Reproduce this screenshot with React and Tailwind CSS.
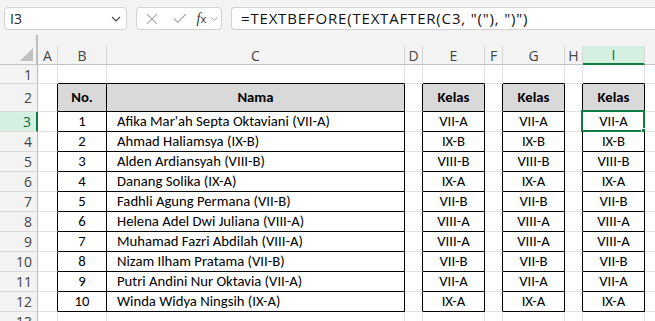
import React from "react";

const names = [
  "Afika Mar'ah Septa Oktaviani (VII-A)",
  "Ahmad Haliamsya (IX-B)",
  "Alden Ardiansyah (VIII-B)",
  "Danang Solika (IX-A)",
  "Fadhli Agung Permana (VII-B)",
  "Helena Adel Dwi Juliana (VIII-A)",
  "Muhamad Fazri Abdilah (VIII-A)",
  "Nizam Ilham Pratama (VII-B)",
  "Putri Andini Nur Oktavia (VII-A)",
  "Winda Widya Ningsih (IX-A)",
];

const cols = ["A", "B", "C", "D", "E", "F", "G", "H", "I", "J"];
const tableCols = ["B", "C", "E", "G", "I"];
const beforeTable = ["A", "D", "F", "H"];
const kelasCols = ["E", "G", "I"];

function kelasOf(n) {
  return n.slice(n.indexOf("(") + 1, n.indexOf(")"));
}

function cellText(r, c) {
  if (r === 2) {
    if (c === "B") return "No.";
    if (c === "C") return "Nama";
    if (kelasCols.includes(c)) return "Kelas";
    return "";
  }
  if (r >= 3 && r <= 12) {
    const i = r - 3;
    if (c === "B") return String(i + 1);
    if (c === "C") return names[i];
    if (kelasCols.includes(c)) return kelasOf(names[i]);
  }
  return "";
}

function Cell({ r, c }) {
  const inRows = r >= 2 && r <= 12;
  const rightBlack = inRows && (tableCols.includes(c) || beforeTable.includes(c));
  const bottomBlack = tableCols.includes(c) && r >= 1 && r <= 12;
  const head = r === 2 && tableCols.includes(c);
  const text = cellText(r, c);
  const selected = r === 3 && c === "I";
  return (
    <div
      className={`relative flex items-center border-r border-b overflow-visible whitespace-nowrap text-[14.7px] text-black font-['Carlito','Lato',sans-serif] ${
        rightBlack ? "border-r-black" : "border-r-[#e1e1e1]"
      } ${bottomBlack ? "border-b-black" : "border-b-[#e1e1e1]"} ${
        head ? "bg-[#d9d9d9] font-bold" : "bg-white"
      } ${c === "C" && !head ? "justify-start pl-[10px]" : "justify-center"}`}
    >
      {text}
      {selected && (
        <div className="absolute -left-[2px] -top-[2px] -right-[1px] -bottom-[1px] border-2 border-[#107c41] pointer-events-none">
          <div className="absolute -right-[4px] -bottom-[4px] w-[6px] h-[6px] bg-[#107c41] border border-white"></div>
        </div>
      )}
    </div>
  );
}

export default function App() {
  const rows = Array.from({ length: 13 }, (_, i) => i + 1);
  return (
    <div className="w-[655px] h-[321px] overflow-hidden bg-[#f3f3f3] font-['Open_Sans',sans-serif]">
      {/* Formula bar */}
      <div className="h-[35px] flex items-start pt-[7px] pl-[4px] gap-[9px]">
        <div className="w-[123px] h-[23px] bg-white border border-[#d1d1d1] rounded-[4px] flex items-center justify-between pl-[5px] pr-[5px]">
          <span className="text-[14px] text-[#222] leading-none">I3</span>
          <svg width="10" height="6" viewBox="0 0 10 6" className="mt-[1px]">
            <path d="M1 1 L5 5 L9 1" fill="none" stroke="#444" strokeWidth="1.1" />
          </svg>
        </div>
        <div className="w-[86px] h-[23px] bg-white border border-[#d1d1d1] rounded-[4px] flex items-center pl-[9px] pr-[3px]">
          <svg width="12" height="12" viewBox="0 0 12 12">
            <path d="M1 1 L11 11 M11 1 L1 11" stroke="#a8a8a8" strokeWidth="1.2" />
          </svg>
          <svg width="14" height="11" viewBox="0 0 14 11" className="ml-[15px]">
            <path d="M1 5.5 L5 9.5 L13 1" fill="none" stroke="#a8a8a8" strokeWidth="1.2" />
          </svg>
          <span className="ml-[10px] text-[14px] italic text-[#333] font-['Liberation_Serif',serif] leading-none">
            f<span className="text-[11px] not-italic font-['Open_Sans',sans-serif]">x</span>
          </span>
          <svg width="7" height="4" viewBox="0 0 7 4" className="ml-[5px]">
            <path d="M0.5 0.5 L3.5 3.5 L6.5 0.5" fill="none" stroke="#999" strokeWidth="0.9" />
          </svg>
        </div>
        <div className="flex-1 h-[23px] bg-white border border-[#d1d1d1] border-r-0 rounded-l-[4px] flex items-center pl-[9px]">
          <span className="text-[15px] text-[#111] whitespace-nowrap tracking-[0.82px]">
            =TEXTBEFORE(TEXTAFTER(C3, "("), ")")
          </span>
        </div>
      </div>

      {/* Sheet */}
      <div className="grid grid-cols-[38px_20px_49px_298px_18px_62px_18px_62px_18px_62px_40px] grid-rows-[30px_19px_28px_repeat(10,20px)_20px]">
        {/* column header row */}
        <div className="border-r-2 border-r-[#bdbdbd] border-b border-b-[#c4c4c4] flex items-end justify-end pr-[3px] pb-[3px]">
          <svg width="13" height="13" viewBox="0 0 13 13">
            <path d="M13 0 L13 13 L0 13 Z" fill="#bfbfbf" />
          </svg>
        </div>
        {cols.map((c) => (
          <div key={c} className="flex flex-col justify-end">
            <div
              className={`h-[19px] flex items-center justify-center text-[14px] border-r border-r-[#d6d6d6] ${
                c === "I"
                  ? "bg-[#d3f0e0] text-[#0f6b3b] border-b-2 border-b-[#107c41]"
                  : "text-[#444] border-b border-b-[#c4c4c4]"
              }`}
            >
              {c}
            </div>
          </div>
        ))}

        {rows.map((r) => (
          <React.Fragment key={r}>
            <div
              className={`flex items-center justify-end pr-[5px] text-[14px] border-b border-b-[#dadada] ${
                r === 3
                  ? "bg-[#d3f0e0] text-[#0f6b3b] border-r-2 border-r-[#107c41]"
                  : "text-[#444] border-r border-r-[#bdbdbd]"
              }`}
            >
              {r}
            </div>
            {cols.map((c) => (
              <Cell key={c} r={r} c={c} />
            ))}
          </React.Fragment>
        ))}
      </div>
    </div>
  );
}
